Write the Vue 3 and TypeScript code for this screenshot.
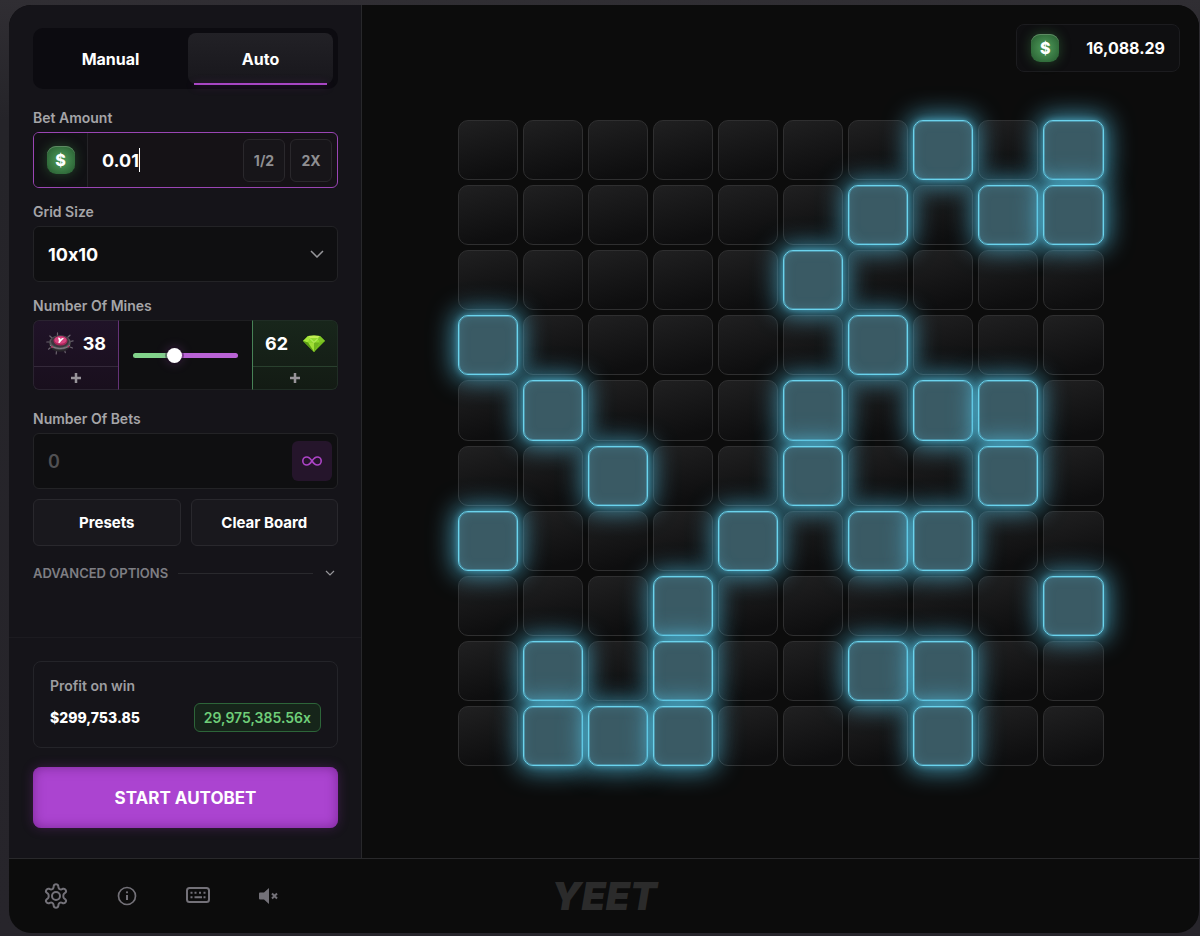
<script setup lang="ts">
import { computed, ref } from 'vue'

type Mode = 'Manual' | 'Auto'

const modes: Mode[] = ['Manual', 'Auto']
const mode = ref<Mode>('Auto')
const bet = ref('0.01')
const gridSize = ref('10x10')
const mines = ref(38)
const bets = ref('')

const picks = ref(new Set<number>([
  7, 9, 16, 18, 19, 25, 30, 36, 41, 45, 47, 48, 52, 55, 58,
  60, 64, 66, 67, 73, 79, 81, 83, 86, 87, 91, 92, 93, 97,
]))

const total = 100
const gems = computed(() => total - mines.value)
const fill = computed(() => ({ '--fill': `${((mines.value - 1) / (total - 2)) * 100}%` }))

function toggle(index: number) {
  const next = new Set(picks.value)
  if (next.has(index)) next.delete(index)
  else next.add(index)
  picks.value = next
}

function addMine(step: number) {
  mines.value = Math.min(total - 1, Math.max(1, mines.value + step))
}

function scaleBet(factor: number) {
  bet.value = Math.max(0.01, Number(bet.value) * factor).toFixed(2)
}
</script>

<template>
  <div class="page">
    <div class="game">
      <div class="body">
        <aside class="sidebar">
          <div class="controls">
            <div class="tabs">
              <button
                v-for="m in modes"
                :key="m"
                type="button"
                class="tab"
                :class="{ active: mode === m }"
                @click="mode = m"
              >{{ m }}</button>
            </div>

            <div class="group">
              <label class="label" for="bet">Bet Amount</label>
              <div class="field focused">
                <span class="currency"><span class="coin">$</span></span>
                <label class="amount" for="bet">
                  <input id="bet" v-model="bet" class="text bet" type="text" inputmode="decimal">
                  <span class="caret"></span>
                </label>
                <button type="button" class="mult" @click="scaleBet(0.5)">1/2</button>
                <button type="button" class="mult" @click="scaleBet(2)">2X</button>
              </div>
            </div>

            <div class="group">
              <label class="label" for="grid">Grid Size</label>
              <div class="field">
                <select id="grid" v-model="gridSize" class="text select">
                  <option>5x5</option>
                  <option>8x8</option>
                  <option>10x10</option>
                </select>
                <svg class="chevron" width="14" height="8" viewBox="0 0 14 8"><path d="M1 1l6 6 6-6" /></svg>
              </div>
            </div>

            <div class="group">
              <label class="label" for="mines">Number Of Mines</label>
              <div class="mines">
                <div class="count purple">
                  <div class="value">
                    <svg width="28" height="23" viewBox="0 0 28 23">
                      <g stroke="#6b646e" stroke-width="1.2" stroke-linecap="round">
                        <path d="M11.500 3V.8M22 5l2-1.800M24.500 9.500l2.600-.6M24 15l2.500 1M18.500 18l.8 2.600M10.500 19l-.3 3M4.500 15.500l-2 1.700M3.500 10H.8M5.500 5.500L3.800 4" />
                      </g>
                      <ellipse cx="14" cy="12" rx="11" ry="7.800" fill="#29262b" />
                      <ellipse cx="14" cy="10.500" rx="10.700" ry="7.300" fill="#59565b" />
                      <path d="M4 13c3 4 16 5 20 0" fill="none" stroke="#858086" stroke-width="1" />
                      <ellipse cx="14" cy="9.500" rx="9" ry="5.900" fill="#3b373e" />
                      <ellipse cx="14.500" cy="8.800" rx="7" ry="4.800" fill="#a82659" />
                      <ellipse cx="14.500" cy="8" rx="6" ry="3.800" fill="#d64580" />
                      <path d="M12 5.500l2 .4.7 1.500 1.300-1.400 2 .3-2.800 2.600-1.600 2-1.400-.2.700-2z" fill="#fff" />
                      <circle cx="6" cy="15" r="1" fill="#b23565" />
                      <circle cx="22.500" cy="14.500" r="1" fill="#b23565" />
                    </svg>
                    <span>{{ mines }}</span>
                  </div>
                  <button type="button" class="plus" aria-label="More mines" @click="addMine(1)">
                    <svg width="10" height="10" viewBox="0 0 10 10"><path d="M5 0v10M0 5h10" /></svg>
                  </button>
                </div>
                <div class="slider">
                  <input id="mines" v-model.number="mines" type="range" min="1" max="99" :style="fill">
                </div>
                <div class="count green">
                  <div class="value">
                    <span>{{ gems }}</span>
                    <svg width="22" height="17" viewBox="0 0 22 17">
                      <path d="M5 1q6-1 12 0l5 5-11 11L0 6z" fill="#72bd1c" />
                      <path d="M5 1q6-1 12 0l-2 2.500H7z" fill="#c2ee55" />
                      <path d="M7 3.500h8l2 4H5z" fill="#8fdc2c" />
                      <path d="M5 1l2 2.500-2 4L0 6z" fill="#a5e63a" />
                      <path d="M17 1l-2 2.500 2 4L22 6z" fill="#7fc626" />
                      <path d="M5 7.500h12L11 17z" fill="#a0df36" />
                      <path d="M11 7.500h6L11 17z" fill="#6fb41d" />
                      <path d="M0 6l5 1.500L11 17z" fill="#5a9c14" />
                      <path d="M7 3.500l4 4 4-4" fill="none" stroke="#def88b" stroke-width=".7" />
                    </svg>
                  </div>
                  <button type="button" class="plus" aria-label="More gems" @click="addMine(-1)">
                    <svg width="10" height="10" viewBox="0 0 10 10"><path d="M5 0v10M0 5h10" /></svg>
                  </button>
                </div>
              </div>
            </div>

            <div class="group spaced">
              <label class="label" for="bets">Number Of Bets</label>
              <div class="field">
                <input id="bets" v-model="bets" class="text number" type="text" placeholder="0">
                <button type="button" class="infinite" aria-label="Infinite bets">
                  <svg width="20" height="10" viewBox="0 0 20 10">
                    <path d="M10 5C8 2 6.700 1 4.800 1a4 4 0 0 0 0 8C6.700 9 8 8 10 5s3.300-4 5.200-4a4 4 0 0 1 0 8C13.300 9 12 8 10 5z" />
                  </svg>
                </button>
              </div>
            </div>

            <div class="pair">
              <button type="button" class="secondary">Presets</button>
              <button type="button" class="secondary">Clear Board</button>
            </div>

            <button type="button" class="advanced">
              <span>ADVANCED OPTIONS</span>
              <span class="rule"></span>
              <svg class="chevron" width="10" height="6" viewBox="0 0 10 6"><path d="M1 1l4 4 4-4" /></svg>
            </button>
          </div>

          <div class="summary">
            <div class="card">
              <span class="profit-label">Profit on win</span>
              <div class="profit">
                <strong>$299,753.85</strong>
                <span class="multiplier">29,975,385.56x</span>
              </div>
            </div>
            <button type="button" class="start">START AUTOBET</button>
          </div>
        </aside>

        <main class="stage">
          <div class="balance">
            <span class="coin">$</span>
            <span>16,088.29</span>
          </div>
          <div class="board">
            <button
              v-for="n in total"
              :key="n"
              type="button"
              class="tile"
              :class="{ lit: picks.has(n - 1) }"
              :aria-label="`Tile ${n}`"
              @click="toggle(n - 1)"
            ></button>
          </div>
        </main>
      </div>

      <footer class="footer">
        <div class="tools">
          <button type="button" aria-label="Settings">
            <svg width="26" height="26" viewBox="0 0 26 26">
              <path d="M10.700 3.200Q11 1.300 13 1.300t2.300 1.900l.3 1.500q.2 1 1.100 1.500t1.800.2l1.400-.6q1.800-.6 2.800 1.100t-.5 2.900l-1.200 1q-.7.700-.7 2.200t.7 2.200l1.200 1q1.500 1.200.5 2.900t-2.800 1.100l-1.400-.6q-.9-.3-1.800.2t-1.100 1.500l-.3 1.500q-.3 1.900-2.300 1.900t-2.300-1.900l-.3-1.500q-.2-1-1.100-1.500t-1.800-.2l-1.400.6q-1.800.6-2.800-1.100t.5-2.900l1.200-1q.7-.7.7-2.200t-.7-2.200l-1.200-1q-1.500-1.200-.5-2.900t2.800-1.100l1.400.6q.9.300 1.800-.2t1.100-1.500z" />
              <circle cx="13" cy="13" r="4" />
            </svg>
          </button>
          <button type="button" aria-label="Info">
            <svg width="26" height="26" viewBox="0 0 26 26">
              <circle cx="13" cy="13" r="8.500" stroke-width="1.700" />
              <path d="M13 12v5" />
              <circle cx="13" cy="9.300" r="1.100" class="solid" />
            </svg>
          </button>
          <button type="button" aria-label="Keyboard shortcuts">
            <svg width="26" height="26" viewBox="0 0 26 26">
              <rect x="2" y="5" width="22" height="14" rx="2.500" />
              <path d="M5.500 9.700h2M9.500 9.700h2M14 9.700h2M18.500 9.700h2M5.500 14.300h2M9.500 14.300h7.500M18.500 14.300h2" />
            </svg>
          </button>
          <button type="button" aria-label="Sound off">
            <svg width="26" height="26" viewBox="0 0 26 26">
              <path class="solid" d="M4 9.500h4l5-4.500v16l-5-4.500H4q-1 0-1-1v-5q0-1 1-1z" />
              <path d="M16 10.500l5 5M21 10.500l-5 5" />
            </svg>
          </button>
        </div>
        <span class="logo">YEET</span>
        <span></span>
      </footer>
    </div>
  </div>
</template>

<style>
body {
  background: #28262b;
}
</style>

<style scoped>
.page {
  box-sizing: border-box;
  min-height: 100vh;
  padding: 5px 1px 3px 9px;
  display: flex;
  background: linear-gradient(180deg, #302e33 0, #252429 120px, #27252b 100%);
  color: #fff;
  font-family: Inter, "Liberation Sans", sans-serif;
  font-size: 14px;
  font-feature-settings: "calt" 0;
}
.page *,
.page *::before {
  box-sizing: border-box;
}
button,
input,
select {
  margin: 0;
  padding: 0;
  border: 0;
  outline: 0;
  background: none;
  color: inherit;
  font: inherit;
  font-feature-settings: inherit;
}
button {
  cursor: pointer;
}
svg {
  display: block;
  flex: none;
}
.game {
  flex: 1;
  display: flex;
  flex-direction: column;
  overflow: hidden;
  border-radius: 22px;
  background: #0c0c0c;
}
.body {
  flex: 1;
  display: flex;
}
.sidebar {
  flex: none;
  width: 353px;
  display: flex;
  flex-direction: column;
  justify-content: space-between;
  border-right: 1px solid #28282b;
  background: #151419;
}
.controls {
  padding: 23px 23px 0 24px;
  display: flex;
  flex-direction: column;
}
.tabs {
  height: 61px;
  margin-bottom: 5px;
  padding: 5px;
  display: grid;
  grid-template-columns: 1fr 1fr;
  gap: 5px;
  border-radius: 10px;
  background: #0c0b10;
}
.tab {
  position: relative;
  border-radius: 8px;
  font-size: 16px;
  font-weight: 700;
}
.tab.active {
  background: linear-gradient(180deg, #222126, #18171c);
}
.tab.active::before {
  content: "";
  position: absolute;
  right: 6px;
  bottom: -1px;
  left: 6px;
  height: 2px;
  background: #a846c4;
  box-shadow: 0 1px 8px rgba(168, 50, 190, 0.35);
}
.group {
  margin-top: 15px;
  display: flex;
  flex-direction: column;
  gap: 5px;
}
.group.spaced {
  margin-top: 20px;
}
.label {
  line-height: 18px;
  color: #a5a5a8;
  font-weight: 600;
}
.field {
  height: 56px;
  display: flex;
  align-items: center;
  border: 1px solid #232326;
  border-radius: 6px;
  background: #0f0f11;
  position: relative;
}
.field.focused {
  gap: 5px;
  padding-right: 5px;
  border-color: #9a45b4;
  background: #151216;
}
.currency {
  align-self: stretch;
  width: 54px;
  display: flex;
  align-items: center;
  justify-content: center;
  border-right: 1px solid #252428;
  border-radius: 5px 0 0 5px;
  background: #111114;
}
.coin {
  width: 28px;
  height: 28px;
  display: flex;
  align-items: center;
  justify-content: center;
  border-radius: 9px;
  background: radial-gradient(circle, #489153 20%, #2d6637 80%);
  box-shadow: 0 0 12px rgba(61, 140, 72, 0.45), inset 0 1px 0 #5d8a62;
  font-size: 16px;
  font-weight: 800;
}
.text {
  font-size: 18px;
  font-weight: 700;
}
.amount {
  flex: 1;
  min-width: 0;
  padding-left: 9px;
  display: flex;
  align-items: center;
}
.bet {
  field-sizing: content;
  max-width: 120px;
  caret-color: transparent;
}
.caret {
  width: 1px;
  height: 24px;
  background: #fff;
}
.mult {
  width: 42px;
  height: 43px;
  border: 1px solid #2a282c;
  border-radius: 6px;
  background: #171519;
  color: #8f8f92;
  font-weight: 700;
}
.select {
  width: 100%;
  height: 54px;
  padding: 0 14px;
  appearance: none;
}
.select option {
  background: #151419;
}
.chevron {
  fill: none;
  stroke: #96969a;
  stroke-width: 1.5;
}
.field .chevron {
  position: absolute;
  right: 13px;
  pointer-events: none;
}
.mines {
  height: 70px;
  display: flex;
  overflow: hidden;
  border-radius: 6px;
  background: #0f0f11;
  box-shadow: inset 0 0 0 1px #1e1e21;
}
.count {
  width: 86px;
  display: flex;
  flex-direction: column;
}
.purple {
  border: 1px solid #2a2330;
  border-right-color: #653277;
  border-radius: 6px 0 0 6px;
  background: linear-gradient(180deg, #201328, #190f1d);
}
.green {
  border: 1px solid #202d25;
  border-left-color: #478256;
  border-radius: 0 6px 6px 0;
  background: linear-gradient(180deg, #18261b, #131b14);
}
.value {
  flex: 1;
  display: flex;
  align-items: center;
  justify-content: space-between;
  padding: 0 12px;
  font-size: 18px;
  font-weight: 700;
}
.plus {
  height: 23px;
  display: flex;
  align-items: center;
  justify-content: center;
  border-top: 1px solid #34293a;
}
.green .plus {
  border-top-color: #29402e;
}
.plus path {
  stroke: #98949a;
  stroke-width: 2.5;
}
.slider {
  flex: 1;
  padding: 0 14px;
  display: flex;
  align-items: center;
}
.slider input {
  width: 100%;
  height: 15px;
  appearance: none;
}
.slider input::-webkit-slider-runnable-track {
  height: 5px;
  border-radius: 3px;
  background: linear-gradient(90deg, #82d38b var(--fill), #b963d5 var(--fill));
}
.slider input::-webkit-slider-thumb {
  width: 15px;
  height: 15px;
  margin-top: -5px;
  appearance: none;
  border-radius: 50%;
  background: #fff;
  box-shadow: 0 0 0 2px rgba(30, 12, 34, 0.4), 0 0 12px rgba(185, 99, 213, 0.3);
}
.number {
  flex: 1;
  min-width: 0;
  padding-left: 14px;
}
.number::placeholder {
  color: #505053;
  opacity: 1;
  font-weight: 600;
}
.infinite {
  width: 40px;
  height: 40px;
  margin-right: 5px;
  display: flex;
  align-items: center;
  justify-content: center;
  border-radius: 6px;
  background: #25152b;
}
.infinite path {
  fill: none;
  stroke: #ad44c7;
  stroke-width: 1.6;
}
.pair {
  margin-top: 10px;
  display: grid;
  grid-template-columns: 1fr 1fr;
  gap: 10px;
}
.secondary {
  height: 47px;
  border: 1px solid #29282d;
  border-radius: 6px;
  background: #19181d;
  font-size: 15px;
  font-weight: 700;
}
.advanced {
  height: 18px;
  margin: 18px 0 24px;
  padding-right: 3px;
  display: flex;
  align-items: center;
  gap: 10px;
  color: #7e7e83;
  font-size: 13px;
  font-weight: 600;
}
.rule {
  flex: 1;
  height: 1px;
  margin-right: 2px;
  background: #29292d;
}
.advanced .chevron {
  stroke-width: 1.2;
}
.summary {
  padding: 23px 23px 30px 24px;
  display: flex;
  flex-direction: column;
  gap: 19px;
  border-top: 1px solid #1c1b20;
}
.card {
  height: 87px;
  padding: 0 16px;
  display: flex;
  flex-direction: column;
  justify-content: center;
  gap: 8px;
  border: 1px solid #242429;
  border-radius: 8px;
}
.profit-label {
  line-height: 18px;
  color: #9d9da0;
  font-weight: 600;
}
.profit {
  display: flex;
  align-items: center;
  justify-content: space-between;
}
.profit strong {
  font-weight: 800;
}
.multiplier {
  height: 29px;
  padding: 0 9px;
  line-height: 27px;
  border: 1px solid #2d6539;
  border-radius: 6px;
  background: #16251a;
  color: #6fce79;
  font-weight: 600;
}
.start {
  height: 61px;
  border-radius: 8px;
  background: #ab44d0;
  box-shadow: inset 0 0 12px rgba(90, 20, 110, 0.6), 0 0 12px rgba(150, 50, 180, 0.3);
  font-size: 17px;
  font-weight: 700;
}
.stage {
  flex: 1;
  min-width: 0;
  padding: 19px 19px 40px;
  display: flex;
  flex-direction: column;
  background: #0c0c0c;
}
.balance {
  align-self: flex-end;
  height: 48px;
  padding: 0 14px;
  display: flex;
  align-items: center;
  gap: 27px;
  border: 1px solid #1c1c1f;
  border-radius: 8px;
  background: #0f0f11;
  font-size: 16px;
  font-weight: 700;
}
.board {
  width: 100%;
  max-width: 646px;
  margin: 48px auto 0;
  display: grid;
  grid-template-columns: repeat(10, 1fr);
  gap: 5px;
}
.tile {
  aspect-ratio: 1;
  border: 1px solid #2f2f30;
  border-radius: 10px;
  background: linear-gradient(165deg, #202021, #0e0e0f 85%);
}
.tile.lit {
  position: relative;
  z-index: 1;
  border-color: #6bd3ec;
  background: #3a5a64;
  box-shadow:
    0 0 6px rgba(88, 196, 228, 0.55),
    0 0 24px 5px rgba(82, 184, 216, 0.75),
    inset 0 0 0 1px rgba(91, 190, 217, 0.5),
    inset 0 0 12px rgba(80, 160, 185, 0.3);
}
.footer {
  height: 75px;
  padding: 0 34px;
  display: grid;
  grid-template-columns: 1fr auto 1fr;
  align-items: center;
  border-top: 1px solid #29292b;
}
.tools {
  display: flex;
  gap: 45px;
}
.tools svg {
  fill: none;
  stroke: #737178;
  stroke-width: 2;
}
.tools .solid {
  fill: #737178;
  stroke: none;
}
.logo {
  color: #2b2b2b;
  font-size: 39px;
  font-style: italic;
  font-weight: 900;
  line-height: 40px;
}
</style>
